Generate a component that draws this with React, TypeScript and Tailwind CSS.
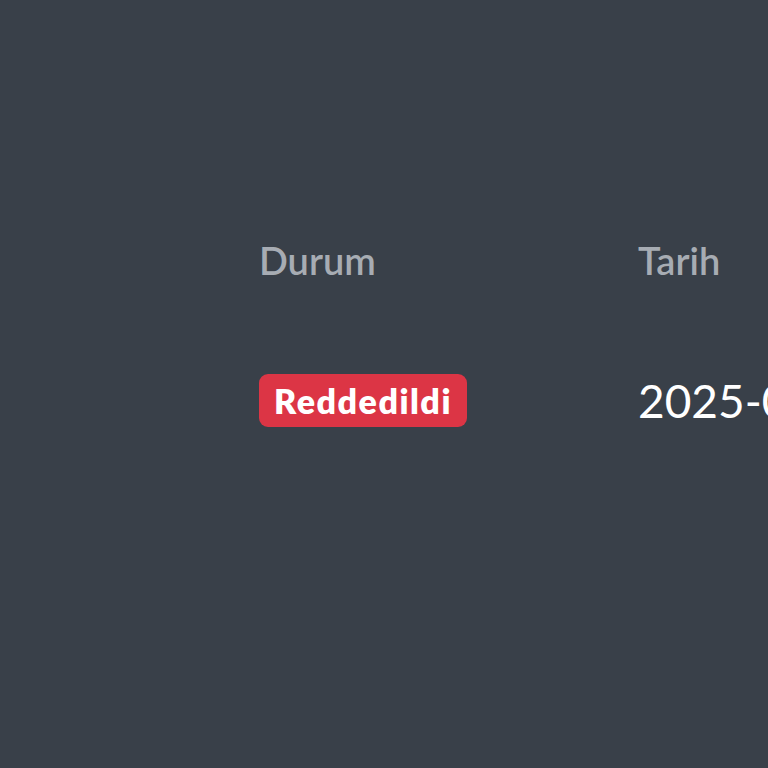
export default function App() {
  return (
    <div className="w-[768px] h-[768px] bg-[#394049] overflow-hidden" style={{ fontFamily: "Lato, 'Open Sans', sans-serif" }}>
      <div className="pt-[236px] pl-[259px] grid grid-cols-[379px_1fr] whitespace-nowrap">
        <div className="text-[38px] leading-[48px] font-semibold text-[#a7acb3]">Durum</div>
        <div className="text-[38px] leading-[48px] font-semibold text-[#a7acb3]">Tarih</div>
        <div className="mt-[90px]">
          <span className="inline-flex items-center h-[53px] px-[15px] rounded-[9px] bg-[#dc3545] text-white text-[34px] font-extrabold tracking-[1.5px]">Reddedildi</span>
        </div>
        <div className="mt-[90px] h-[53px] flex items-center text-[46px] text-white">2025-06-12</div>
      </div>
    </div>
  );
}
